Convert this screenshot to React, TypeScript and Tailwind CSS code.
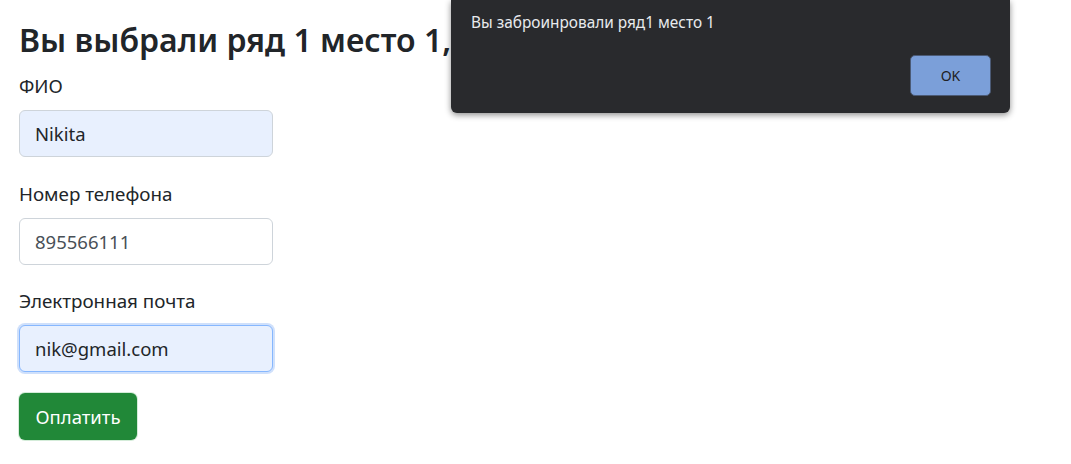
export default function App() {
  return (
    <div className="relative h-[464px] w-[1071px] overflow-hidden bg-white text-[#212529]" style={{ fontFamily: '"Noto Sans", "Open Sans", sans-serif' }}>
      <div className="px-[19px] pt-[20px]">
        <h1 className="mb-[13px] whitespace-nowrap text-[32px] font-semibold leading-[40px]">Вы выбрали ряд 1 место 1,</h1>
        <form className="flex w-[254px] flex-col">
          <label className="mb-[10px] text-[18.8px] leading-[27px]">ФИО</label>
          <input
            className="mb-[24px] h-[47px] rounded-[6px] border border-[#ced4da] bg-[#e8f0fe] px-[15px] text-[18.5px] outline-none"
            defaultValue="Nikita"
          />
          <label className="mb-[10px] text-[18.8px] leading-[27px]">Номер телефона</label>
          <input
            className="mb-[23px] h-[47px] rounded-[6px] border border-[#ced4da] bg-white px-[15px] text-[18.5px] text-[#495057] outline-none"
            defaultValue="895566111"
          />
          <label className="mb-[10px] text-[18.8px] leading-[27px]">Электронная почта</label>
          <input
            className="mb-[21px] h-[47px] rounded-[6px] border border-[#86b7fe] bg-[#e8f0fe] px-[15px] text-[18.5px] outline-none ring-2 ring-[#cfe0fb]"
            defaultValue="nik@gmail.com"
          />
          <button
            type="button"
            className="h-[47px] w-[118px] rounded-[6px] bg-[#218838] text-[18.5px] text-white ring-1 ring-[#d4ecd9]"
          >
            Оплатить
          </button>
        </form>
      </div>

      <div className="absolute left-[451px] top-0 flex h-[113px] w-[559px] flex-col rounded-b-[6px] bg-[#292a2d] px-[20px] pt-[13px] shadow-[0_2px_6px_rgba(0,0,0,0.45)]">
        <p className="text-[15.4px] leading-[20px] text-[#e8eaed]">Вы заброинровали ряд1 место 1</p>
        <div className="mt-[22px] flex justify-end">
          <button
            type="button"
            className="mr-[-1px] h-[41px] w-[81px] rounded-[5px] border border-[#4b5a75] bg-[#7b9fd9] text-[14px] text-[#202124]"
          >
            OK
          </button>
        </div>
      </div>
    </div>
  )
}
